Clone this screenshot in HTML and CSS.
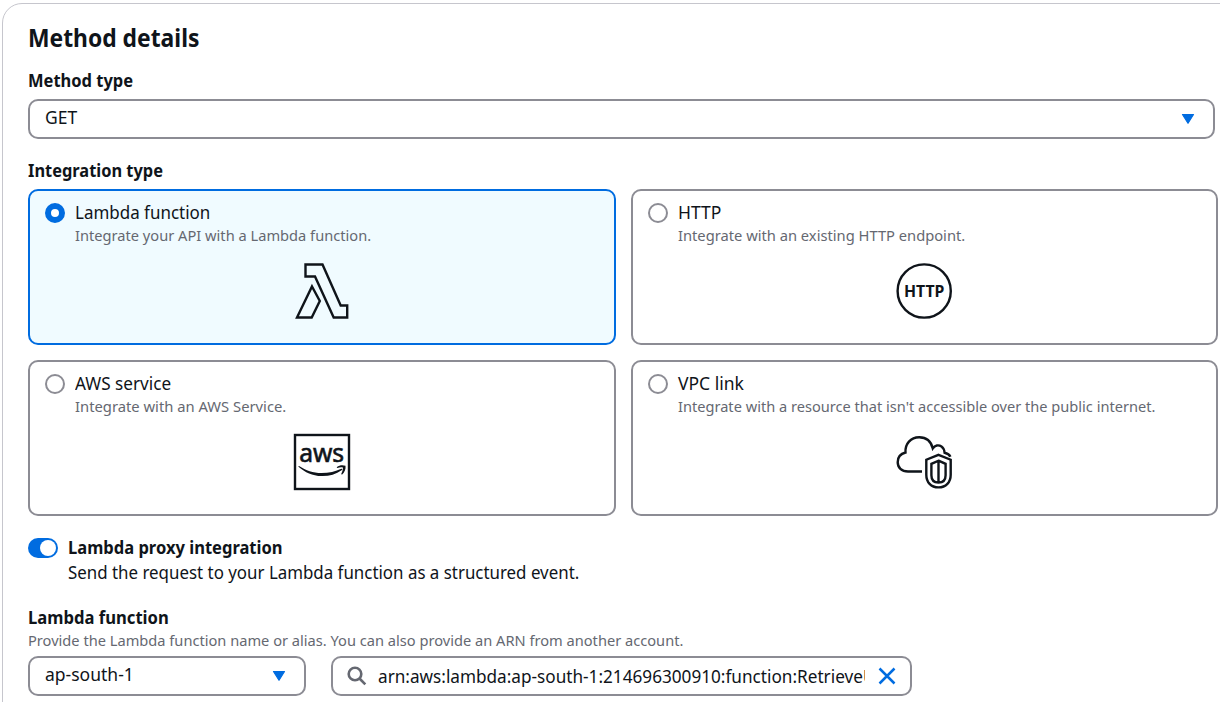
FILE: index.html
```html
<!DOCTYPE html>
<html lang="en">
<head>
<meta charset="utf-8">
<title>Method details</title>
<link rel="stylesheet" href="styles.css">
</head>
<body>
<main class="panel">
  <h2 class="title"><span class="t-title">Method details</span></h2>

  <section class="field">
    <div class="label"><span class="t-method">Method type</span></div>
    <div class="control select">
      <span class="value t-get">GET</span>
      <svg class="caret" viewBox="0 0 14 12"><path d="M1.500 1.500h11L7 10.300z"/></svg>
    </div>
  </section>

  <section class="field integration">
    <div class="label"><span class="t-integration">Integration type</span></div>
    <div class="tiles">
      <div class="tile selected">
        <div class="tile-head">
          <span class="radio on"></span>
          <div class="tile-text">
            <div class="name"><span class="t-lambda">Lambda function</span></div>
            <div class="hint"><span class="t-lambda-hint">Integrate your API with a Lambda function.</span></div>
          </div>
        </div>
        <svg class="art" viewBox="0 0 60 60"><g class="stroke">
          <path d="M13.500 3.500h17L48.700 44.500h6.500V56.500H41.700L23 15.500H13.500z"/>
          <path d="M20 25.500L27.800 40 19.700 56.500H5z"/>
        </g></svg>
      </div>
      <div class="tile">
        <div class="tile-head">
          <span class="radio"></span>
          <div class="tile-text">
            <div class="name"><span class="t-http">HTTP</span></div>
            <div class="hint"><span class="t-http-hint">Integrate with an existing HTTP endpoint.</span></div>
          </div>
        </div>
        <svg class="art" viewBox="0 0 60 60">
          <circle class="stroke" cx="29.200" cy="30" r="26.600"/>
          <text class="http-mark" x="29.200" y="35.900" text-anchor="middle" textLength="40.500" lengthAdjust="spacingAndGlyphs">HTTP</text>
        </svg>
      </div>
      <div class="tile">
        <div class="tile-head">
          <span class="radio"></span>
          <div class="tile-text">
            <div class="name"><span class="t-aws">AWS service</span></div>
            <div class="hint"><span class="t-aws-hint">Integrate with an AWS Service.</span></div>
          </div>
        </div>
        <svg class="art" viewBox="0 0 60 60">
          <rect class="stroke" x="3" y="3" width="54" height="54"/>
          <text class="aws-mark" x="29.700" y="30" text-anchor="middle" textLength="45" lengthAdjust="spacingAndGlyphs">aws</text>
          <path class="ink" d="M7 34C14 38.500 21 41 29.500 41C37 41 43.500 39.500 49.300 36.700C50.200 36.500 50.600 37.500 50 38C43.500 42.500 37 44.300 29.500 44.100C20.500 43.800 13 40.500 6.500 34.700C6.300 34.200 6.600 33.900 7 34z"/>
          <path class="ink" d="M45 35C47.500 32.900 51 32.900 53.500 33.800C54 37 52.500 40.500 50.200 42.500C49.500 42.800 49.100 42.400 49.300 41.800C50.500 39.500 51 37.500 50.900 35.600C49.200 35.100 47.500 35.400 45.500 35.900C44.800 35.900 44.600 35.400 45 35z"/>
        </svg>
      </div>
      <div class="tile">
        <div class="tile-head">
          <span class="radio"></span>
          <div class="tile-text">
            <div class="name"><span class="t-vpc">VPC link</span></div>
            <div class="hint"><span class="t-vpc-hint">Integrate with a resource that isn't accessible over the public internet.</span></div>
          </div>
        </div>
        <svg class="art" viewBox="0 0 60 60"><g class="stroke">
          <path d="M27 39.500H13C6.500 39.500 2.700 35.500 2.700 30.200C2.700 25.300 5.700 21.700 10.500 20.500C9.900 12 15.700 5.200 24.200 5.200C31.200 5.200 36 9.200 37.800 16.400C40 13.200 43.500 12.500 46.500 14.500C48.700 16 49.300 18.200 49.600 20.700C52.200 21.200 54.400 22.400 55.400 24.700"/>
          <path d="M43.500 22.900L55.700 27.700V42.700C55.700 50.200 51 55.400 43.500 55.400S31.300 50.200 31.300 42.700V27.700z"/>
          <path d="M43.500 28.700L50.600 31.900V43.200C50.600 47.700 48 50.500 43.500 50.500S36.400 47.700 36.400 43.200V31.900zM43.500 28.700V50.700"/>
        </g></svg>
      </div>
    </div>
  </section>

  <section class="toggle-row">
    <span class="toggle"><span class="knob"></span></span>
    <div>
      <div class="name strong"><span class="t-proxy">Lambda proxy integration</span></div>
      <div class="name"><span class="t-send">Send the request to your Lambda function as a structured event.</span></div>
    </div>
  </section>

  <section class="function">
    <div class="label"><span class="t-fn">Lambda function</span></div>
    <div class="hint"><span class="t-fn-hint">Provide the Lambda function name or alias. You can also provide an ARN from another account.</span></div>
    <div class="inputs">
      <div class="control select region">
        <span class="value t-region">ap-south-1</span>
        <svg class="caret" viewBox="0 0 14 12"><path d="M1.500 1.500h11L7 10.300z"/></svg>
      </div>
      <div class="control search">
        <svg class="glass" viewBox="0 0 20 20"><circle cx="8" cy="8" r="6.300"/><path d="M12.500 12.500L18.300 18.300"/></svg>
        <span class="arn"><span class="t-arn">arn:aws:lambda:ap-south-1:214696300910:function:RetrieveU</span></span>
        <svg class="clear" viewBox="0 0 18 18"><path d="M1.500 1.500L16.500 16.500M16.500 1.500L1.500 16.500"/></svg>
      </div>
    </div>
  </section>
</main>
</body>
</html>
```

FILE: styles.css
```css
* { box-sizing: border-box; }
body {
  margin: 0;
  height: 702px;
  overflow: hidden;
  background: #fff;
  color: #0f141a;
  font-family: "Noto Sans", "Open Sans", sans-serif;
}
.panel {
  width: 1240px;
  height: 730px;
  margin: 3px 0 0 2px;
  padding: 20px 0 0 25px;
  border: 1px solid #c6c6cd;
  border-radius: 20px;
}
.title { margin: 0; height: 30px; font-size: 25px; line-height: 27px; font-weight: 700; white-space: nowrap; }
.field { padding-top: 15px; }
.integration { padding-top: 20px; }
.label, .name { height: 25px; font-size: 17.5px; line-height: 25px; white-space: nowrap; }
.label { line-height: 23px; }
.tile-text .name { line-height: 23px; }
.label, .strong { font-weight: 700; }
.hint { height: 20px; font-size: 15px; line-height: 18px; color: #656871; white-space: nowrap; }

/* Condensed text widths */
.title span, .label span, .name span, .hint span, .arn span { display: inline-block; transform-origin: 0 50%; }
.t-title { transform: scaleX(.914); }
.t-method { transform: scaleX(.942); }
.t-integration { transform: scaleX(.937); }
.t-lambda { transform: scaleX(.97); }
.t-lambda-hint { transform: scaleX(.976); }
.t-http-hint { transform: scaleX(.98); }
.t-aws { transform: scaleX(.98); }
.t-aws-hint { transform: scaleX(.985); }
.t-vpc-hint { transform: scaleX(.973); }
.t-proxy { transform: scaleX(.945); }
.t-send { transform: scaleX(.965); }
.t-fn { transform: scaleX(.95); }
.t-fn-hint { transform: scaleX(.975); }
.t-arn { transform: scaleX(.981); }

.control {
  display: flex;
  align-items: center;
  height: 40px;
  border: 2px solid #8c8c94;
  border-radius: 10px;
  font-size: 17.5px;
  line-height: 25px;
  background: #fff;
}
.select { width: 1187px; margin-top: 5px; padding: 0 18px 0 15px; justify-content: space-between; }
.value { padding-bottom: 3px; }
.caret { width: 14px; height: 12px; fill: #006ce0; stroke: #006ce0; stroke-width: 1.200; stroke-linejoin: round; }
.tiles { display: grid; grid-template-columns: 588px 587px; grid-auto-rows: 156px; gap: 15px; margin-top: 5px; }
.tile { display: flex; flex-direction: column; align-items: center; padding: 10px 15px; border: 2px solid #8c8c94; border-radius: 10px; }
.selected { border-color: #006ce0; background: #f0fbff; }
.tile-head { display: flex; gap: 10px; align-self: stretch; }
.radio { width: 20px; height: 20px; margin-top: 2px; border: 2px solid #8c8c94; border-radius: 50%; }
.radio.on { border: 6px solid #006ce0; background: #fff; }
.art { width: 60px; height: 60px; margin-top: 15px; }
.stroke { fill: none; stroke: #0f141a; stroke-width: 2.400; }
.ink { fill: #0f141a; }
.http-mark { font-size: 15.5px; font-weight: 700; fill: #0f141a; }
.aws-mark { font-size: 24.5px; font-weight: 400; fill: #0f141a; stroke: #0f141a; stroke-width: .6; }
.toggle-row { display: flex; gap: 10px; margin-top: 19px; }
.toggle { display: flex; justify-content: flex-end; width: 30px; height: 20px; margin-top: 3px; padding: 2px; border-radius: 10px; background: #006ce0; }
.knob { width: 16px; height: 16px; border-radius: 50%; background: #fff; }
.function { margin-top: 21px; }
.inputs { display: flex; gap: 25px; padding-top: 5px; }
.region { width: 278px; margin: 0; }
.search { width: 581px; padding: 0 14px; }
.glass { width: 20px; height: 20px; fill: none; stroke: #656871; stroke-width: 2.600; }
.arn { width: 487px; height: 25px; margin: 0 13px 0 11px; overflow: hidden; white-space: nowrap; line-height: 24px; }
.clear { width: 18px; height: 18px; fill: none; stroke: #006ce0; stroke-width: 2.500; }
```
